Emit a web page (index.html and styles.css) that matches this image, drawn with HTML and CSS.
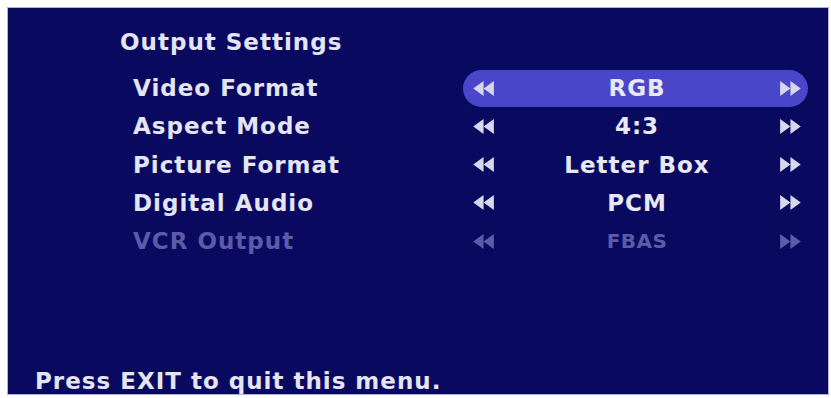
FILE: index.html
```html
<!DOCTYPE html>
<html>
<head>
<meta charset="utf-8">
<link rel="stylesheet" href="styles.css">
</head>
<body>
<div class="panel">
  <div class="title">Output Settings</div>
  <div class="rows">
    <div class="row">
      <div class="label">Video Format</div>
      <div class="control active">
        <svg class="arrow" viewBox="0 0 24 16"><polygon points="0,8 11,0 11,16"/><polygon points="11,8 22,0 22,16"/></svg>
        <div class="value">RGB</div>
        <svg class="arrow" viewBox="0 0 24 16"><polygon points="2,0 13,8 2,16"/><polygon points="13,0 24,8 13,16"/></svg>
      </div>
    </div>
    <div class="row">
      <div class="label">Aspect Mode</div>
      <div class="control">
        <svg class="arrow" viewBox="0 0 24 16"><polygon points="0,8 11,0 11,16"/><polygon points="11,8 22,0 22,16"/></svg>
        <div class="value">4:3</div>
        <svg class="arrow" viewBox="0 0 24 16"><polygon points="2,0 13,8 2,16"/><polygon points="13,0 24,8 13,16"/></svg>
      </div>
    </div>
    <div class="row">
      <div class="label">Picture Format</div>
      <div class="control">
        <svg class="arrow" viewBox="0 0 24 16"><polygon points="0,8 11,0 11,16"/><polygon points="11,8 22,0 22,16"/></svg>
        <div class="value">Letter Box</div>
        <svg class="arrow" viewBox="0 0 24 16"><polygon points="2,0 13,8 2,16"/><polygon points="13,0 24,8 13,16"/></svg>
      </div>
    </div>
    <div class="row">
      <div class="label">Digital Audio</div>
      <div class="control">
        <svg class="arrow" viewBox="0 0 24 16"><polygon points="0,8 11,0 11,16"/><polygon points="11,8 22,0 22,16"/></svg>
        <div class="value">PCM</div>
        <svg class="arrow" viewBox="0 0 24 16"><polygon points="2,0 13,8 2,16"/><polygon points="13,0 24,8 13,16"/></svg>
      </div>
    </div>
    <div class="row disabled">
      <div class="label">VCR Output</div>
      <div class="control">
        <svg class="arrow" viewBox="0 0 24 16"><polygon points="0,8 11,0 11,16"/><polygon points="11,8 22,0 22,16"/></svg>
        <div class="value small">FBAS</div>
        <svg class="arrow" viewBox="0 0 24 16"><polygon points="2,0 13,8 2,16"/><polygon points="13,0 24,8 13,16"/></svg>
      </div>
    </div>
  </div>
  <div class="footer">Press EXIT to quit this menu.</div>
</div>
</body>
</html>
```

FILE: styles.css
```css
html, body {
  margin: 0;
  padding: 0;
  background: #ffffff;
}
body {
  padding: 7px 0 0 7px;
  font-family: "DejaVu Sans", "Verdana", sans-serif;
  font-weight: bold;
}
.panel {
  box-sizing: border-box;
  width: 822px;
  height: 388px;
  background: #0a0960;
  border: 1px solid #aeb2d6;
  color: #e4e4f2;
  display: flex;
  flex-direction: column;
  padding: 21px 0 0 0;
}
.title {
  font-size: 23px;
  line-height: 26px;
  padding-left: 112px;
  letter-spacing: 1px;
}
.rows {
  margin-top: 14px;
  display: flex;
  flex-direction: column;
}
.row {
  display: flex;
  align-items: center;
  height: 38.25px;
}
.label {
  width: 330px;
  padding-left: 125px;
  font-size: 23px;
  letter-spacing: 1px;
}
.control {
  width: 345px;
  height: 37px;
  box-sizing: border-box;
  display: flex;
  align-items: center;
  padding: 0 6px 0 9px;
  border-radius: 19px;
  color: #e8e8f4;
}
.control.active {
  background: #4a46c9;
}
.arrow {
  width: 25px;
  height: 15px;
  fill: #d6d6ec;
  flex: none;
}
.value {
  flex: 1;
  text-align: center;
  font-size: 23px;
  letter-spacing: 1px;
}
.value.small {
  font-size: 20px;
  letter-spacing: 0.4px;
}
.disabled .label,
.disabled .value {
  color: #5b5ca8;
}
.disabled .arrow {
  fill: #5b5ca8;
}
.footer {
  margin-top: auto;
  padding: 0 0 0 27px;
  font-size: 23px;
  line-height: 26px;
  letter-spacing: 1px;
}
```
